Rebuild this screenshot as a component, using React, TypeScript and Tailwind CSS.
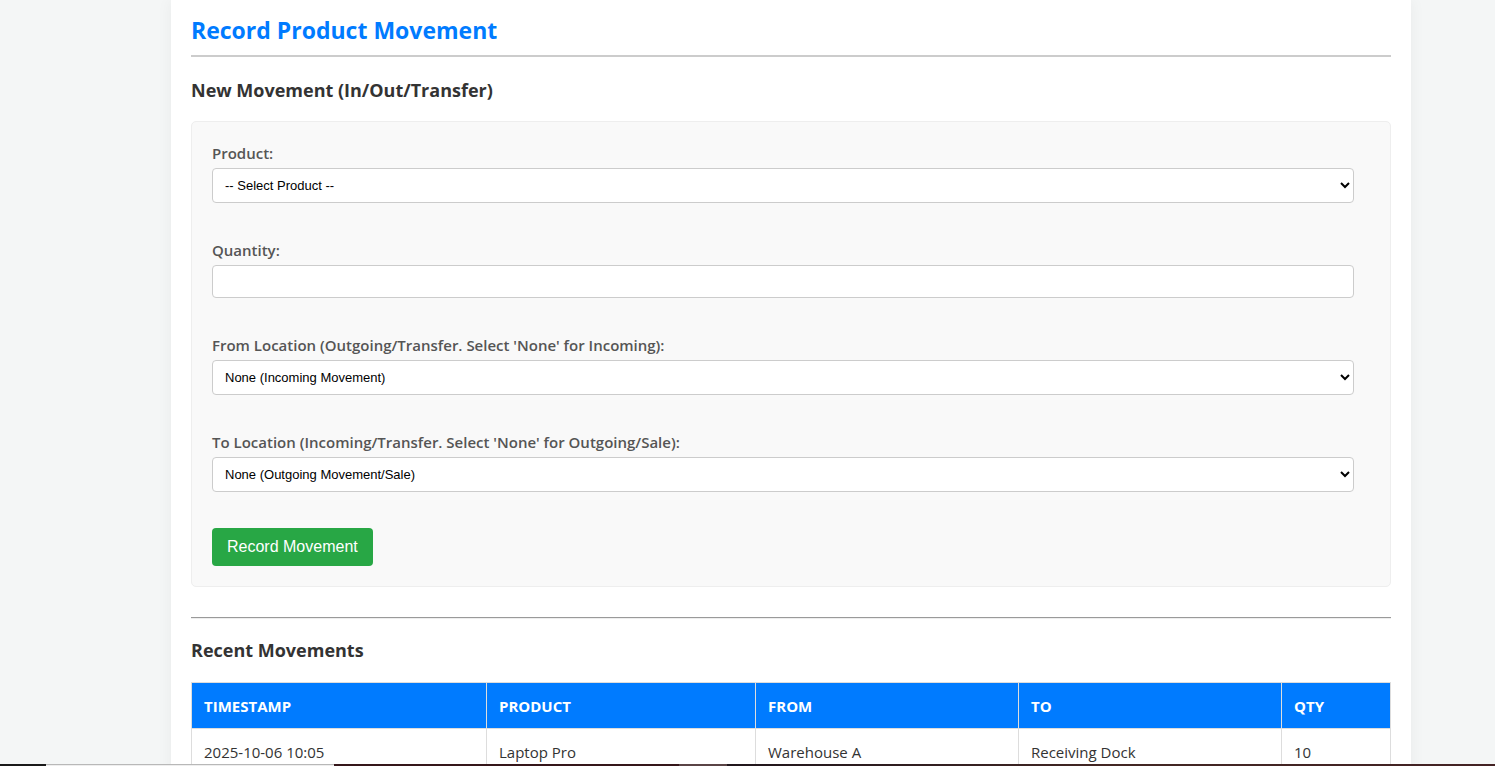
const fieldClass =
  "block w-full rounded-[4px] border border-[#ccc] bg-white px-2 font-['Liberation_Sans',Arial,sans-serif] text-[13px] text-black";

const labelClass = "block h-[26px] text-[15px] leading-[22px] font-semibold text-[#555]";

type SelectFieldProps = { id: string; label: string; options: string[] };

function SelectField({ id, label, options }: SelectFieldProps) {
  return (
    <div>
      <label htmlFor={id} className={labelClass}>
        {label}
      </label>
      <select id={id} name={id} className={`${fieldClass} h-[35px]`}>
        {options.map((option) => (
          <option key={option}>{option}</option>
        ))}
      </select>
    </div>
  );
}

const columns = [
  { name: "Timestamp", width: "w-[295px]" },
  { name: "Product", width: "w-[269px]" },
  { name: "From", width: "w-[263px]" },
  { name: "To", width: "w-[263px]" },
  { name: "Qty", width: "w-[109px]" },
];

const movements = [["2025-10-06 10:05", "Laptop Pro", "Warehouse A", "Receiving Dock", "10"]];

export default function App() {
  return (
    <div className="h-screen overflow-hidden bg-[#f4f6f6] pr-[84px] pl-[171px] font-['Open_Sans','Noto_Sans',sans-serif] text-[#333]">
      <main className="min-h-full bg-white px-5 pt-3 shadow-[0_0_15px_rgba(0,0,0,0.05)]">
        <h2 className="h-[45px] border-b-2 border-[#ccc] text-[23px] leading-[36px] font-bold text-[#007bff]">
          Record Product Movement
        </h2>
        <h3 className="mt-[18px] text-[18px] leading-[30px] font-bold">New Movement (In/Out/Transfer)</h3>

        <form
          className="mt-4 flex flex-col gap-9 rounded-[5px] border border-[#eee] bg-[#f9f9f9] py-5 pr-9 pl-5"
          onSubmit={(event) => event.preventDefault()}
        >
          <SelectField id="product" label="Product:" options={["-- Select Product --", "Laptop Pro"]} />
          <div>
            <label htmlFor="quantity" className={labelClass}>
              Quantity:
            </label>
            <input id="quantity" name="quantity" type="number" className={`${fieldClass} h-[33px]`} />
          </div>
          <SelectField
            id="from"
            label="From Location (Outgoing/Transfer. Select 'None' for Incoming):"
            options={["None (Incoming Movement)", "Warehouse A"]}
          />
          <SelectField
            id="to"
            label="To Location (Incoming/Transfer. Select 'None' for Outgoing/Sale):"
            options={["None (Outgoing Movement/Sale)", "Receiving Dock"]}
          />
          <button
            type="submit"
            className="h-[38px] self-start rounded-[4px] bg-[#28a745] px-[15px] font-['Liberation_Sans',Arial,sans-serif] text-[16px] text-white"
          >
            Record Movement
          </button>
        </form>

        <hr className="mt-[30px] h-[2px] border-t border-b border-t-[#9a9a9a] border-b-[#eee]" />
        <h3 className="mt-4 text-[18px] leading-[30px] font-bold">Recent Movements</h3>

        <table className="mt-[17px] w-full table-fixed border-collapse text-left text-[15px] leading-[24px]">
          <thead>
            <tr className="h-[46px] bg-[#007bff] text-white uppercase">
              {columns.map((column) => (
                <th key={column.name} scope="col" className={`border border-[#ddd] px-3 font-bold ${column.width}`}>
                  {column.name}
                </th>
              ))}
            </tr>
          </thead>
          <tbody>
            {movements.map((row) => (
              <tr key={row[0]} className="h-[46px]">
                {row.map((cell) => (
                  <td key={cell} className="border border-[#ddd] px-3">
                    {cell}
                  </td>
                ))}
              </tr>
            ))}
          </tbody>
        </table>
      </main>

      <div className="fixed inset-x-0 bottom-0 flex h-[2px]">
        <div className="w-[46px] bg-[#1a1a1a]" />
        <div className="w-[288px] border-t border-[#b8b8b8] bg-[#eee]" />
        <div className="w-[345px] bg-[#35161a]" />
        <div className="w-12 bg-[#5a4446]" />
        <div className="flex-1 bg-linear-to-r from-[#20161c] via-[#432724] to-[#432224]" />
      </div>
    </div>
  );
}
